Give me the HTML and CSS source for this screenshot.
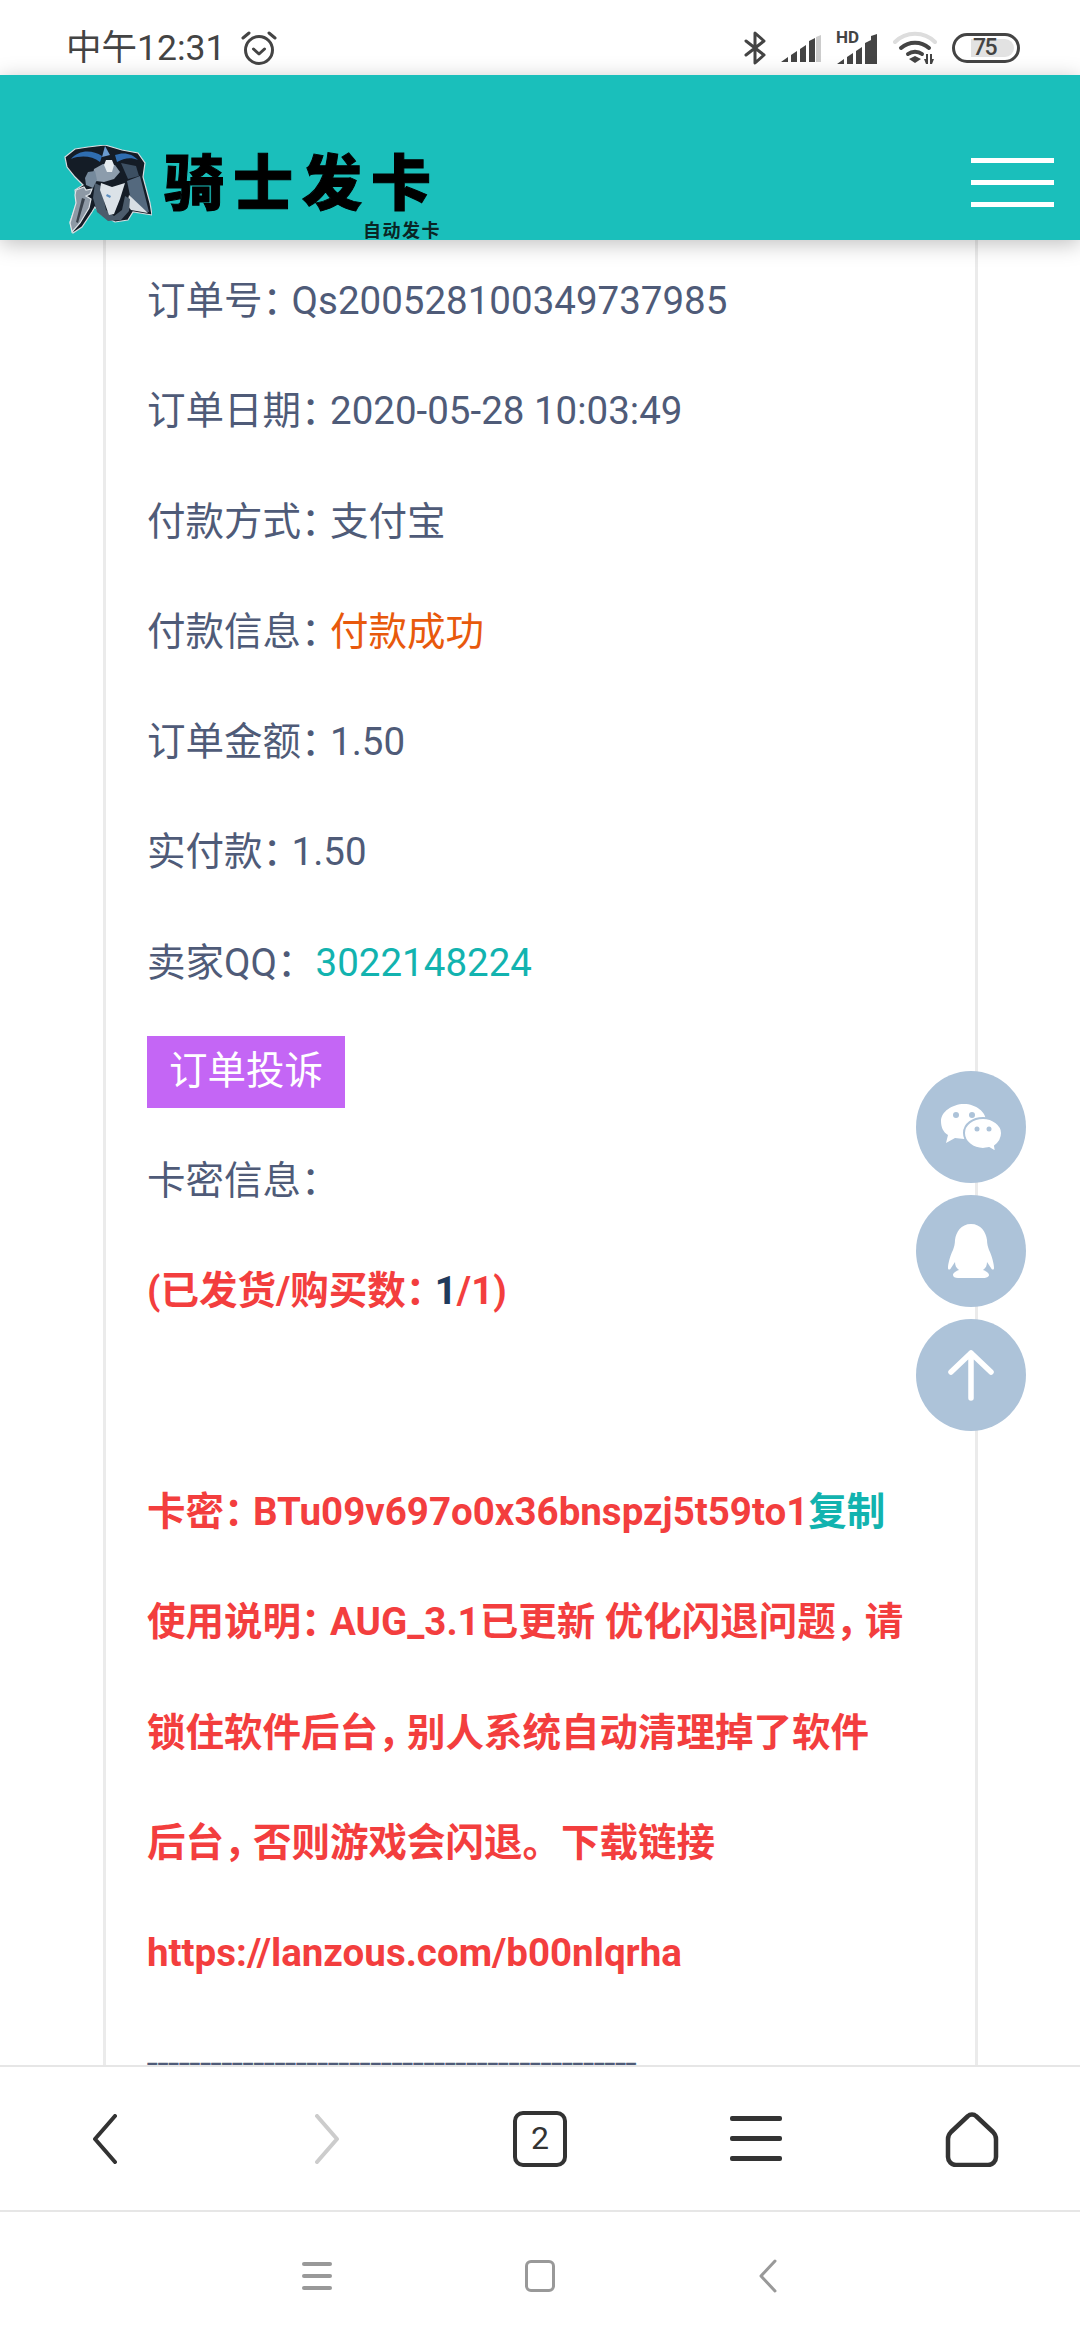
FILE: index.html
```html
<!DOCTYPE html>
<html lang="zh-CN">
<head>
    <meta charset="UTF-8">
    <title>骑士发卡</title>
    <link rel="stylesheet" href="styles.css">
</head>
<body>
    <!-- barra de estado -->
    <div class="status">
        <div class="status-left">
            <span class="time">中午12:31</span>
            <svg width="36" height="36" viewBox="0 0 36 36" fill="none" stroke="#444" stroke-width="3" stroke-linecap="round" stroke-linejoin="round">
                <circle cx="18" cy="20" r="13.5"/>
                <path d="M12.5 19l5.5 5 5.5-5"/>
                <path d="M2 8l6-5M34 8l-6-5"/>
            </svg>
        </div>
        <div class="status-right">
            <svg class="ic-bt" width="22" height="34" viewBox="0 0 22 34" fill="none" stroke="#444" stroke-width="3" stroke-linejoin="round" stroke-linecap="round">
                <path d="M2 10l18 14-9 8V2l9 8L2 24"/>
            </svg>
            <svg width="40" height="30" viewBox="0 0 40 30">
                <path fill="#444" d="M0 29l7-5v5zM10 22l6-4v11h-6zM19 16l6-4v17h-6zM28 8l6-3v24h-6z"/>
                <path fill="#ccc" d="M35 4l5-2v27h-5z"/>
            </svg>
            <svg class="ic-hd" width="42" height="34" viewBox="0 0 42 34">
                <text x="1" y="12" class="hd">HD</text>
                <path fill="#444" d="M2 33l7-5v5zM12 26l6-4v11h-6zM21 20l6-4v17h-6zM30 12l6-3v24h-6zM36 5l6-2v30h-6z"/>
            </svg>
            <svg class="ic-wifi" width="44" height="34" viewBox="0 0 44 34" fill="none" stroke-linecap="round">
                <path stroke="#ddd" stroke-width="4" d="M2 11C13 0 31 0 42 11"/>
                <path stroke="#444" stroke-width="4" d="M8 17c8-7 20-7 28 0"/>
                <path stroke="#444" stroke-width="4" d="M15 23c4-3 10-3 14 0"/>
                <path fill="#444" d="M16 28l6-3 6 3-6 4z"/>
                <path fill="#444" d="M33 23h2v10h-2l-2-5h2zM37 23h2l0 5h2l-2 5h-2z"/>
            </svg>
            <div class="battery"><span class="battery-fill"></span><span class="battery-num">75</span></div>
        </div>
    </div>

    <!-- cabecera -->
    <header class="topbar">
        <svg class="logo-mark" width="90" height="90" viewBox="0 0 90 90">
            <path fill="#141c26" stroke="#d5dce0" stroke-width="1.2" d="M3 12L13 4 26 2 43 0 60 5 76 8 83 18 81 32 88 58 90 70 71 67 66 75 53 77 40 70 33 62 30 67 20 82 11 88 8 77 15 58 13 45 21 40 13 32 5 22z"/>
            <path fill="#2f6db0" d="M9 14C16 5 30 4 40 11l-2 6C30 11 19 10 9 14zM53 10c8-3 17-2 23 5-7-3-14-2-21 2z"/>
            <path fill="#6b9bd0" d="M43 1l5 9-8 2z"/>
            <path fill="#3c4f62" d="M59 18l15 3 3 10-11 3z"/>
            <path fill="#8c9cac" d="M32 24l9-5 12 1 5 7-6 7-10 3-8-1-3-6z"/>
            <path fill="#e6ebef" d="M44 15l6 0 2 5-2 7-5 0-3-7z"/>
            <path fill="#75899c" d="M26 27l7-1 2 9-4 8-7-3-1-7z"/>
            <path fill="#54697e" d="M65 36l13-5 9 36-16-2z"/>
            <path fill="#d8dfe4" d="M67 50l19 18-17-3-4-5z"/>
            <path fill="#4c5c6c" d="M33 38l6 3 5 24 8 6 8-6 3-14 5 3-1 12-8 9-13 1-11-9-4-14z"/>
            <path fill="#dbe2e8" d="M39 38l11 4 13-4-5 16-6 15-5 1-5-14-4-11z"/>
            <path fill="#5d8fc0" d="M45 49l4 2-1 2-4-2z"/>
            <path fill="#8d99a5" stroke="#dfe5e9" stroke-width="1.2" d="M14 45l8-3 2 3 6-1-2 5-4 2 5 3-2 9-9 15-8 9-2-9 6-20-1-8z"/>
            <path fill="#39424c" d="M20 53l3 1-7 24-2-1z"/>
        </svg>
        <div class="brand">
            <span class="brand-name">骑士发卡</span>
            <span class="brand-sub">自动发卡</span>
        </div>
        <div class="burger"><i></i><i></i><i></i></div>
    </header>

    <main class="page">
        <div class="card">
            <p>订单号<span class="pn">：</span>Qs200528100349737985</p>
            <p>订单日期<span class="pn">：</span>2020-05-28 10:03:49</p>
            <p>付款方式<span class="pn">：</span>支付宝</p>
            <p>付款信息<span class="pn">：</span><span class="orange">付款成功</span></p>
            <p>订单金额<span class="pn">：</span>1.50</p>
            <p>实付款<span class="pn">：</span>1.50</p>
            <p>卖家QQ<span class="pn">：</span> <span class="teal">3022148224</span></p>
            <a class="btn-complain">订单投诉</a>
            <p>卡密信息<span class="pn">：</span></p>
            <p class="red">(已发货/购买数<span class="pn">：</span><span class="navy">1</span>/1)</p>
            <p class="blank"></p>
            <p class="red">卡密<span class="pn">：</span>BTu09v697o0x36bnspzj5t59to1<span class="teal">复制</span></p>
            <p class="red">使用说明<span class="pn">：</span>AUG_3.1已更新 优化闪退问题<span class="pn">，</span>请<br>锁住软件后台<span class="pn">，</span>别人系统自动清理掉了软件<br>后台<span class="pn">，</span>否则游戏会闪退。下载链接<br>https://lanzous.com/b00nlqrha</p>
            <p class="dashes">----------------------------------------------</p>
        </div>
    </main>

    <!-- botones flotantes -->
    <div class="float-btns">
        <div class="float-btn">
            <svg width="64" height="50" viewBox="0 0 64 50">
                <path fill="#fff" d="M25 2c12 0 22 8 22 17 0 10-10 18-22 18-3 0-6-1-9-1l-9 5 2-8C4 30 2 25 2 19 2 10 13 2 25 2z"/>
                <path fill="#fff" stroke="#adc3d9" stroke-width="2" d="M44 16c10 0 19 7 19 15 0 5-3 10-7 13l1 6-7-4c-2 0-4 1-6 1-10 0-19-7-19-16s9-15 19-15z"/>
                <circle cx="17" cy="13" r="3" fill="#adc3d9"/><circle cx="33" cy="13" r="3" fill="#adc3d9"/>
                <circle cx="38" cy="27" r="2.5" fill="#adc3d9"/><circle cx="50" cy="27" r="2.5" fill="#adc3d9"/>
            </svg>
        </div>
        <div class="float-btn">
            <svg width="48" height="56" viewBox="0 0 48 56">
                <path fill="#fff" d="M24 1c10 0 15 8 16 16 0 4 1 7 2 10 3 6 5 14 5 18 0 2-2 2-3 0l-4-6c0 3-1 6-4 8 3 1 6 3 6 5 0 2-3 3-5 3H11c-3 0-5-1-5-3 0-2 3-4 6-5-3-2-4-5-4-8l-4 6c-1 2-3 2-3 0 0-4 2-12 5-18 1-3 2-6 2-10C9 9 14 1 24 1z"/>
            </svg>
        </div>
        <div class="float-btn">
            <svg width="48" height="52" viewBox="0 0 48 52" fill="none" stroke="#fff" stroke-width="5.5" stroke-linecap="round" stroke-linejoin="round">
                <path d="M24 49V4M4 23L24 4l20 19"/>
            </svg>
        </div>
    </div>

    <!-- barra del navegador -->
    <nav class="browser-bar">
        <svg class="b-back" width="26" height="50" viewBox="0 0 26 50" fill="none" stroke="#333" stroke-width="4" stroke-linecap="round" stroke-linejoin="round"><path d="M23 2L3 25l20 23"/></svg>
        <svg class="b-next" width="26" height="50" viewBox="0 0 26 50" fill="none" stroke="#ccc" stroke-width="4" stroke-linecap="round" stroke-linejoin="round"><path d="M3 2l20 23L3 48"/></svg>
        <div class="tab-count">2</div>
        <div class="b-menu"><i></i><i></i><i></i></div>
        <svg width="54" height="56" viewBox="0 0 54 56" fill="none" stroke="#333" stroke-width="4.5" stroke-linejoin="round"><path d="M23 5c2-2 6-2 8 0l17 16c2 2 3 4 3 7v18a8 8 0 0 1-8 8H11a8 8 0 0 1-8-8V28c0-3 1-5 3-7z"/></svg>
    </nav>

    <!-- barra del sistema -->
    <nav class="sys-bar">
        <div class="s-menu"><i></i><i></i><i></i></div>
        <div class="s-home"></div>
        <svg class="s-back" width="18" height="34" viewBox="0 0 18 34" fill="none" stroke="#999" stroke-width="3" stroke-linecap="round" stroke-linejoin="round"><path d="M16 2L2 17l14 15"/></svg>
    </nav>
</body>
</html>
```
FILE: styles.css
```css
* {
    box-sizing: border-box;
}
html, body {
    margin: 0;
    padding: 0;
}
body {
    position: relative;
    width: 1080px;
    height: 2340px;
    overflow: hidden;
    display: flex;
    flex-direction: column;
    background: #fff;
    font-family: Roboto, "Noto Sans CJK SC", sans-serif;
    color: #4f5b78;
}

/* status */
.status {
    height: 75px;
    flex: none;
    display: flex;
    justify-content: space-between;
    align-items: center;
    padding: 20px 60px 0 66px;
}
.status-left {
    display: flex;
    align-items: center;
    gap: 16px;
}
.time {
    font-size: 35.5px;
    line-height: 44px;
    color: #444;
}
.status-right {
    display: flex;
    align-items: center;
    gap: 14px;
}
.ic-bt {
    margin-right: 1px;
}
.ic-hd {
    overflow: visible;
}
.ic-wifi {
    margin-left: 2px;
    margin-right: -1px;
}
.hd {
    font-family: Roboto, sans-serif;
    font-size: 17px;
    font-weight: 700;
    fill: #444;
}
.battery {
    position: relative;
    width: 68px;
    height: 30px;
    border: 3.5px solid #444;
    border-radius: 15px;
    margin-left: 2px;
}
.battery-fill {
    position: absolute;
    left: 16px;
    top: 3px;
    bottom: 3px;
    right: 3px;
    background: #e2e2e2;
    border-radius: 0 10px 10px 0;
}
.battery-num {
    position: absolute;
    left: 18px;
    top: 0;
    font-size: 23px;
    line-height: 23px;
    letter-spacing: -1.5px;
    font-weight: 500;
    color: #444;
}

/* header */
.topbar {
    position: relative;
    z-index: 2;
    height: 165px;
    flex: none;
    background: #1abfbb;
    box-shadow: 0 4px 20px rgba(0, 0, 0, 0.25);
    display: flex;
    align-items: flex-start;
}
.logo-mark {
    margin: 70px 0 0 62px;
}
.brand {
    position: relative;
    margin: 68px 0 0 12px;
    width: 290px;
}
.brand-name {
    display: block;
    font-family: "Noto Sans CJK SC", sans-serif;
    font-size: 60px;
    font-weight: 900;
    line-height: 72px;
    letter-spacing: 9px;
    color: #000;
    -webkit-text-stroke: 1px #000;
}
.brand-sub {
    position: absolute;
    right: 13px;
    top: 75px;
    font-family: "Noto Sans CJK SC", sans-serif;
    font-size: 18px;
    font-weight: 700;
    line-height: 22px;
    letter-spacing: 1.5px;
    color: #0a2524;
}
.burger {
    margin: 83px 26px 0 auto;
    width: 83px;
    display: flex;
    flex-direction: column;
    gap: 17px;
}
.burger i {
    display: block;
    height: 5px;
    background: #fff;
}

/* content */
.page {
    flex: 1;
    min-height: 0;
    overflow: hidden;
    padding-top: 6px;
}
.card {
    margin: -6px 102px 0 103px;
    padding: 6px 28px 0 41px;
    min-height: calc(100% + 6px);
    border-left: 3px solid #ebebeb;
    border-right: 3px solid #ebebeb;
}
.card p {
    margin: 0;
    font-size: 38.5px;
    line-height: 110.3px;
    white-space: nowrap;
}
.card p.blank {
    height: 110.3px;
}
.card p.dashes {
    -webkit-text-stroke: 0.6px #4f5b78;
}
.pn {
    font-family: "Noto Sans CJK SC", sans-serif;
    letter-spacing: -9.5px;
    line-height: 0;
}
.orange {
    color: #e8590c;
}
.teal {
    color: #12b3af;
}
.navy {
    color: #1f3a5c;
}
.card p.red {
    color: #f33e3e;
    font-weight: 700;
}
.card p.red .teal {
    color: #12b3af;
}
.card p.red .navy {
    color: #1f3a5c;
}
.btn-complain {
    display: block;
    width: 198px;
    height: 72px;
    margin: 18px 0;
    background: #c466f5;
    color: #fff;
    font-size: 38.5px;
    line-height: 70px;
    text-align: center;
}

/* floating */
.float-btns {
    position: absolute;
    right: 54px;
    top: 1071px;
    display: flex;
    flex-direction: column;
    gap: 12px;
}
.float-btn {
    width: 110px;
    height: 112px;
    border-radius: 50%;
    background: #adc3d9;
    display: flex;
    align-items: center;
    justify-content: center;
}

/* browser */
.browser-bar {
    position: relative;
    z-index: 1;
    height: 145px;
    flex: none;
    background: #fff;
    border-top: 2px solid #e6e6e6;
    display: grid;
    grid-template-columns: repeat(5, 216px);
    justify-items: center;
    align-items: center;
}
.b-back {
    margin-left: -6px;
}
.b-next {
    margin-left: 6px;
}
.tab-count {
    width: 54px;
    height: 56px;
    border: 4.5px solid #333;
    border-radius: 10px;
    font-size: 32px;
    line-height: 46px;
    text-align: center;
    color: #333;
}
.b-menu {
    width: 52px;
    display: flex;
    flex-direction: column;
    gap: 15px;
}
.b-menu i {
    display: block;
    height: 5px;
    background: #333;
    border-radius: 2px;
}

/* system */
.sys-bar {
    height: 130px;
    flex: none;
    border-top: 2px solid #e6e6e6;
    display: flex;
    align-items: center;
    gap: 193px;
    padding-left: 302px;
}
.s-menu {
    width: 30px;
    display: flex;
    flex-direction: column;
    gap: 8px;
}
.s-menu i {
    display: block;
    height: 4px;
    background: #999;
    border-radius: 2px;
}
.s-home {
    width: 30px;
    height: 32px;
    border: 3px solid #999;
    border-radius: 6px;
}
.s-back {
    margin-left: 11px;
}
```
